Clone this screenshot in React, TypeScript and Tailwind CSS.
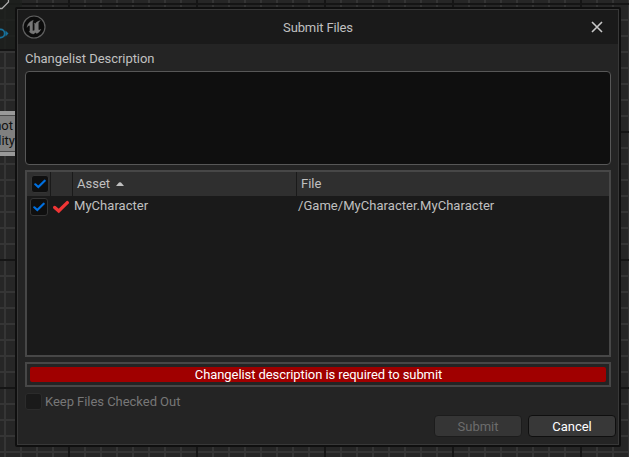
import React from 'react';

const line = (vertical: boolean, period: number, from: number, color: string) =>
  `repeating-linear-gradient(${vertical ? 90 : 180}deg, transparent 0 ${from}px, ${color} ${from}px ${from + 2}px, transparent ${from + 2}px ${period}px)`;

const grid = [
  line(false, 128, 3, '#151515'),
  line(true, 128, 68, '#151515'),
  line(false, 16, 3, '#353535'),
  line(true, 16, 4, '#353535'),
].join(', ');

function Check({ className, color, width }: { className: string; color: string; width: number }) {
  return (
    <svg viewBox="0 0 12 10" className={className} fill="none" stroke={color} strokeWidth={width} strokeLinecap="round">
      <path d="M1.300 5.300 L4.300 8 L10.700 1.700" />
    </svg>
  );
}

function Checkbox({ className = '' }: { className?: string }) {
  return (
    <span className={`flex size-[18px] shrink-0 items-center justify-center rounded-[3px] border border-[#343434] bg-[#0f0f0f] ${className}`}>
      <Check className="h-[10px] w-[12px]" color="#0070e0" width={2.2} />
    </span>
  );
}

function Logo() {
  return (
    <svg viewBox="0 0 24 24" className="size-6" fill="none">
      <circle cx="12" cy="12" r="11" fill="#0b0b0b" stroke="#606060" strokeWidth="1.2" />
      <path
        d="M11.300 5.200C8.100 6.100 5.500 8.500 5 12.400c.8-1.100 1.500-1.900 2.200-1.900.5 0 .7.3.7.9v4.200c0 .7-.3 1-.9.9 1.200 1.600 2.800 2.300 4.800 2.500l1.500-1.600 1.500 1.200c2-1 3.400-2.400 4.100-4.500-.9.8-1.600 1.200-2.100.9-.3-.2-.4-.5-.4-1V8.600c0-1 .8-2.200 2-3-2.300.4-4 1.600-5.200 3.100-.3-.3-.7-.5-1.200-.4.4.4.6.8.6 1.500v5.300c-.7.8-1.700.8-2 .1V8.200c0-1.200.2-2.100.7-3z"
        fill="#777"
        stroke="#777"
        strokeWidth="0.3"
      />
    </svg>
  );
}

export default function App() {
  return (
    <div
      className="relative h-[457px] w-[629px] overflow-hidden bg-[#262626] pt-[7px] pl-[15px] font-['Roboto',sans-serif] text-[13px] leading-[15px] text-[#c0c0c0]"
      style={{ backgroundImage: grid }}
    >
      <div className="absolute top-0 left-0 h-[51px] w-[22px] border-b-2 border-[#141414] bg-[#1b1e1b]/80" />
      <svg className="absolute top-0 left-0 h-[50px] w-[15px]" fill="none">
        <path d="M0 8.500H2L8.500 2V0" stroke="#aaa" strokeWidth="1.300" />
        <path d="M0 29.300h.5a4.200 4.200 0 0 1 0 8.400H0" stroke="#17709a" strokeWidth="1.800" />
        <path d="M5.500 30.500l3 3-3 3z" fill="#17709a" />
      </svg>
      <div className="absolute top-[111px] left-0 h-[45px] w-[15px] border-y-4 border-[#999] bg-[#808080] text-[#111]">
        <div className="flex h-full flex-col items-end border-y border-[#4a4a4a] pt-[2px]">
          <span className="mr-[2px]">not</span>
          <span>ility</span>
        </div>
      </div>

      <div className="relative h-[440px] w-[606px] rounded-[2px] border-2 border-[#0f0f0f]">
        <div className="flex h-full flex-col border border-[#383838] bg-[#242424]">
          <header className="flex h-[34px] shrink-0 items-center justify-between bg-[#1a1a1a] pr-[15px] pl-1">
            <Logo />
            <span className="pr-[1px] tracking-[-0.12px]">Submit Files</span>
            <svg viewBox="0 0 12 12" className="size-3" stroke="#c8c8c8" strokeWidth="1.6">
              <path d="M1 1L11 11M11 1L1 11" />
            </svg>
          </header>

          <main className="flex flex-col px-[7px]">
            <label className="mt-[7px] h-[20px] tracking-[-0.04px]">Changelist Description</label>
            <div className="h-[94px] rounded-[4px] border border-[#575757] bg-[#0f0f0f]" />

            <section className="mt-[5px] h-[187px] border-2 border-[#474747] bg-[#1a1a1a]">
              <div className="flex h-6 bg-[#2f2f2f]">
                <div className="flex w-[24px] items-center border-r border-[#1a1a1a] pl-[4px]">
                  <Checkbox />
                </div>
                <div className="w-[22px] border-r border-[#1a1a1a]" />
                <div className="flex w-[224px] items-center border-r border-[#1a1a1a] pb-[2px] pl-[4px]">
                  Asset
                  <svg className="mt-[1px] ml-[6px] h-1 w-2" viewBox="0 0 8 4">
                    <path d="M0 4L3 .5Q4 0 5 .5L8 4z" fill="#c0c0c0" />
                  </svg>
                </div>
                <div className="flex items-center pb-[2px] pl-[4px]">File</div>
              </div>
              <div className="flex h-[22px] items-center tracking-[0.04px]">
                <Checkbox className="ml-[3px]" />
                <Check className="ml-[5px] h-[14px] w-[16px]" color="#ef3535" width={2.500} />
                <span className="ml-[5px] w-[224px] pb-[3px]">MyCharacter</span>
                <span className="pb-[3px]">/Game/MyCharacter.MyCharacter</span>
              </div>
            </section>

            <div className="mt-[5px] h-[25px] border-2 border-[#474747] p-[3px]">
              <div className="h-[15px] rounded-[2px] bg-[#a00000] pl-[1px] text-center tracking-[-0.08px] text-white">
                Changelist description is required to submit
              </div>
            </div>

            <div className="mt-[5px] flex h-[18px] items-center tracking-[-0.04px] text-[#777]">
              <span className="mr-[3px] size-[17px] rounded-[3px] border border-[#2b2b2b] bg-[#1a1a1a]" />
              Keep Files Checked Out
            </div>
          </main>

          <footer className="mt-[5px] flex justify-end gap-[6px] pr-[2px]">
            <button className="h-[22px] w-[88px] rounded-[4px] border border-[#1c1c1c] bg-[#353535] text-[#6c6c6c]">Submit</button>
            <button className="h-[22px] w-[88px] rounded-[4px] border border-[#0f0f0f] bg-[#383838] text-white">Cancel</button>
          </footer>
        </div>
      </div>
    </div>
  );
}
